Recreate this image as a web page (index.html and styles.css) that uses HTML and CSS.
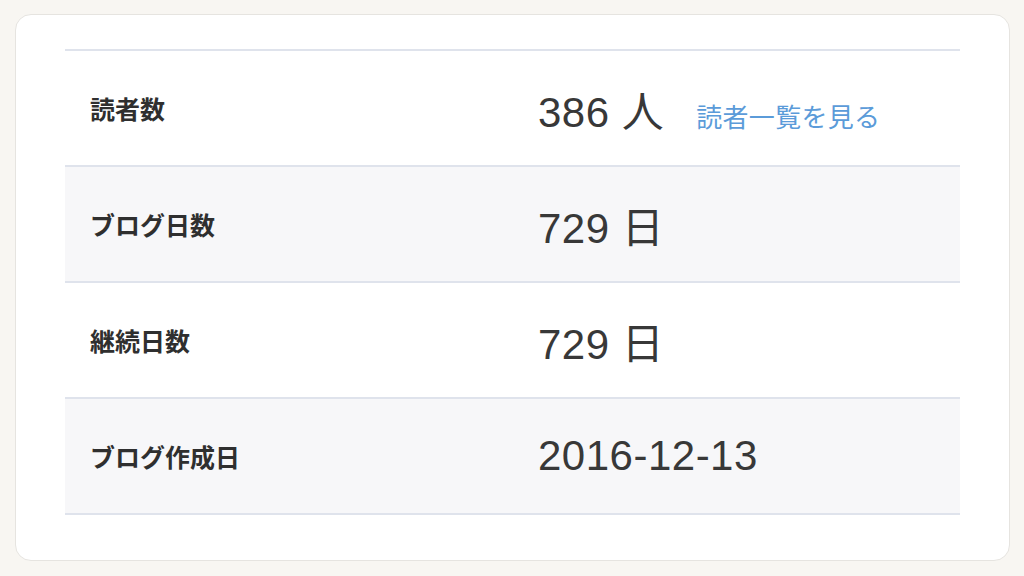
FILE: index.html
```html
<!DOCTYPE html>
<html lang="ja">
<head>
<meta charset="utf-8">
<link rel="stylesheet" href="styles.css">
</head>
<body>
<div class="page">
  <div class="card">
    <div class="table">
      <div class="row">
        <div class="label">読者数</div>
        <div class="value">386 人<a class="link" href="#">読者一覧を見る</a></div>
      </div>
      <div class="row alt">
        <div class="label">ブログ日数</div>
        <div class="value">729 日</div>
      </div>
      <div class="row">
        <div class="label">継続日数</div>
        <div class="value">729 日</div>
      </div>
      <div class="row alt">
        <div class="label">ブログ作成日</div>
        <div class="value">2016-12-13</div>
      </div>
    </div>
  </div>
</div>
</body>
</html>
```

FILE: styles.css
```css
html, body {
  margin: 0;
  padding: 0;
  background: #f8f6f2;
  font-family: "Liberation Sans", "Noto Sans CJK JP", sans-serif;
}
.page {
  width: 1024px;
  height: 576px;
  box-sizing: border-box;
  padding: 14px 14px 15px 15px;
}
.card {
  height: 100%;
  box-sizing: border-box;
  background: #fff;
  border: 1.5px solid #e6e4e0;
  border-radius: 16px;
  padding: 34px 49px 0 49px;
}
.table {
  border-bottom: 2px solid #dfe3ec;
}
.row {
  display: flex;
  align-items: center;
  height: 116px;
  box-sizing: border-box;
  border-top: 2px solid #dfe3ec;
  background: #fff;
}
.row.alt {
  background: #f7f7f9;
}
.label {
  width: 448px;
  padding-left: 25px;
  font-family: "Noto Sans CJK JP", sans-serif;
  font-weight: bold;
  font-size: 25px;
  color: #2f2f2f;
}
.value {
  display: flex;
  align-items: baseline;
  font-family: "Liberation Sans", "Noto Sans CJK JP", sans-serif;
  font-size: 42px;
  letter-spacing: 0.5px;
  color: #383838;
}
.link {
  margin-left: 32px;
  font-family: "Noto Sans CJK JP", sans-serif;
  font-size: 26px;
  letter-spacing: 0.3px;
  color: #5b9bd9;
  text-decoration: none;
}
```
